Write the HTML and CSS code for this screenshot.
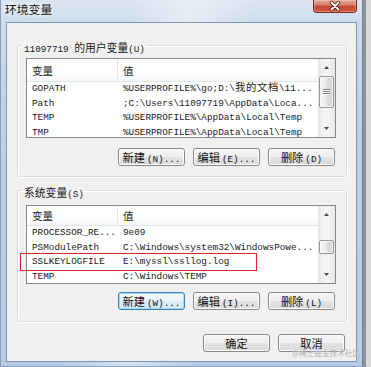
FILE: index.html
```html
<!DOCTYPE html>
<html lang="zh-CN">
<head>
<meta charset="utf-8">
<title>环境变量</title>
<link rel="stylesheet" href="styles.css">
</head>
<body>
<div class="window">
  <div class="titlebar">
    <span class="title">环境变量</span>
    <button class="close" aria-label="关闭">
      <svg width="42" height="12" viewBox="0 0 42 12">
        <path d="M17.5 2.5 L24.5 9.5 M24.5 2.5 L17.5 9.5" stroke="#5b1c14" stroke-width="3.4" stroke-linecap="round"/>
        <path d="M17.5 2.5 L24.5 9.5 M24.5 2.5 L17.5 9.5" stroke="#ffffff" stroke-width="1.8" stroke-linecap="round"/>
      </svg>
    </button>
  </div>
  <div class="content">
    <fieldset class="group group-user">
      <legend><span class="m">11097719 </span><span class="c">的用户变量</span><span class="m">(U)</span></legend>
      <div class="list list-user">
        <div class="list-main">
          <div class="list-head"><div class="col1">变量</div><div class="col2">值</div></div>
          <div class="row"><div class="col1">GOPATH</div><div class="col2">%USERPROFILE%\go;D:\<span class="rc">我的文档</span>\11...</div></div>
          <div class="row"><div class="col1">Path</div><div class="col2">;C:\Users\11097719\AppData\Loca...</div></div>
          <div class="row"><div class="col1">TEMP</div><div class="col2">%USERPROFILE%\AppData\Local\Temp</div></div>
          <div class="row"><div class="col1">TMP</div><div class="col2">%USERPROFILE%\AppData\Local\Temp</div></div>
        </div>
        <div class="scrollbar">
          <div class="sb-btn"><svg width="5" height="3" viewBox="0 0 5 3"><path d="M0 3 L2.5 0 L5 3Z" fill="#4a4a4a"/></svg></div>
          <div class="sb-track"><div class="thumb thumb-user"><span class="grip"></span></div></div>
          <div class="sb-btn"><svg width="5" height="3" viewBox="0 0 5 3"><path d="M0 0 L2.5 3 L5 0Z" fill="#4a4a4a"/></svg></div>
        </div>
      </div>
      <div class="btnrow">
        <button class="btn">新建<span class="m">(N)...</span></button>
        <button class="btn">编辑<span class="m">(E)...</span></button>
        <button class="btn">删除<span class="m">(D)</span></button>
      </div>
    </fieldset>

    <fieldset class="group group-sys">
      <legend><span class="c">系统变量</span><span class="m">(S)</span></legend>
      <div class="list list-sys">
        <div class="list-main">
          <div class="list-head"><div class="col1">变量</div><div class="col2">值</div></div>
          <div class="row"><div class="col1">PROCESSOR_RE...</div><div class="col2">9e09</div></div>
          <div class="row"><div class="col1">PSModulePath</div><div class="col2">C:\Windows\system32\WindowsPowe...</div></div>
          <div class="row"><div class="col1">SSLKEYLOGFILE</div><div class="col2">E:\myssl\ssllog.log</div></div>
          <div class="row"><div class="col1">TEMP</div><div class="col2">C:\Windows\TEMP</div></div>
        </div>
        <div class="scrollbar">
          <div class="sb-btn"><svg width="5" height="3" viewBox="0 0 5 3"><path d="M0 3 L2.5 0 L5 3Z" fill="#4a4a4a"/></svg></div>
          <div class="sb-track"><div class="thumb thumb-sys"></div></div>
          <div class="sb-btn"><svg width="5" height="3" viewBox="0 0 5 3"><path d="M0 0 L2.5 3 L5 0Z" fill="#4a4a4a"/></svg></div>
        </div>
      </div>
      <div class="btnrow">
        <button class="btn btn-default">新建<span class="m">(W)...</span></button>
        <button class="btn">编辑<span class="m">(I)...</span></button>
        <button class="btn">删除<span class="m">(L)</span></button>
      </div>
    </fieldset>

    <div class="dlg-actions">
      <button class="btn">确定</button>
      <button class="btn">取消</button>
    </div>
  </div>
  <div class="annot"></div>
  <div class="watermark">@稀土掘金技术社区</div>
</div>
</body>
</html>
```

FILE: styles.css
```css
* { box-sizing: border-box; }

html, body {
  margin: 0;
  padding: 0;
}

body {
  width: 371px;
  height: 367px;
  overflow: hidden;
  background: linear-gradient(to right, #8d9298 0, #8d9298 366px, #d9d9d9 366px);
  font-family: "Noto Sans CJK SC", "Noto Sans", sans-serif;
  color: #1a1a1a;
}

.window {
  position: relative;
  width: 363px;
  height: 367px;
  padding: 0 6px 5px 6px;
  background:
    linear-gradient(100deg, rgba(255,255,255,0) 30%, rgba(255,255,255,0.45) 45%, rgba(255,255,255,0) 60%),
    linear-gradient(to bottom, #dbe5f1 0, #cfdcec 22px, #bcd0e8 120px, #b6cce6 100%);
  box-shadow: inset -1px 0 0 #6f8299, inset 1px 0 0 #8aa0ba, inset 0 -1px 0 #8aa0ba;
}

.titlebar {
  height: 22px;
  display: flex;
  justify-content: space-between;
  align-items: flex-start;
}

.title {
  margin-left: -1px;
  font-size: 11.8px;
  line-height: 18px;
  color: #111;
  text-shadow: 0 0 6px #fff, 0 0 3px #fff;
}

.close {
  width: 44px;
  height: 13px;
  padding: 0;
  margin: 0;
  border: 1px solid #7d2e24;
  border-top: none;
  border-radius: 0 0 4px 4px;
  background: linear-gradient(to bottom, #e6a597 0, #d6806e 40%, #c44a31 55%, #cf5a3f 100%);
  box-shadow: inset 0 0 0 1px rgba(255,255,255,0.25);
  display: flex;
  align-items: center;
  justify-content: center;
}

.close svg { display: block; }

.content {
  width: 351px;
  height: 340px;
  border: 1px solid #8497b0;
  background: #f0f0f0;
  padding: 16px 10px 0 10px;
}

.m {
  font-family: "Liberation Mono", monospace;
  font-size: 9.3px;
}

.c {
  font-family: "Noto Sans CJK SC", sans-serif;
  font-size: 10.8px;
}

.group {
  width: 330px;
  margin: 0;
  border: 1px solid #d5dfe5;
  border-radius: 3px;
  box-shadow: inset 1px 1px 0 #fff, 1px 1px 0 #fff;
  padding: 7px 10px 10px 8px;
  min-width: 0;
}

.group legend {
  margin-left: -4px;
  padding: 0 2px;
  height: 12px;
  line-height: 12px;
  color: #1a1a1a;
  white-space: nowrap;
}

.group-sys {
  margin-top: 7px;
  padding-top: 9px;
  padding-bottom: 11px;
}

.list {
  position: relative;
  display: flex;
  height: 80px;
  border: 1px solid #828790;
  background: #fff;
}

.list-sys { height: 79px; }

.list-main {
  flex: 1;
  min-width: 0;
  overflow: hidden;
}

.list-head {
  display: flex;
  height: 23px;
  border-bottom: 1px solid #e3e6ea;
  background: linear-gradient(to bottom, #ffffff 0, #ffffff 60%, #f6f7f9 100%);
  font-family: "Noto Sans CJK SC", sans-serif;
  font-size: 10.6px;
  color: #1c1c1c;
}

.list-sys .list-head { height: 20px; }

.list-head .col1,
.list-head .col2 {
  display: flex;
  align-items: center;
}

.list-head .col1 { border-right: 1px solid #e3e6ea; }

.col1 {
  width: 91px;
  flex: none;
  padding-left: 5px;
  white-space: nowrap;
  overflow: hidden;
}

.col2 {
  flex: 1;
  padding-left: 5px;
  white-space: nowrap;
}

.row {
  display: flex;
  height: 14.5px;
  line-height: 14.5px;
  font-family: "Liberation Mono", monospace;
  font-size: 9.33px;
  color: #1a1a1a;
}

.rc {
  font-family: "Noto Sans CJK SC", sans-serif;
  font-size: 10.4px;
  line-height: 1;
  letter-spacing: 0.6px;
}

.scrollbar {
  width: 17px;
  flex: none;
  display: flex;
  flex-direction: column;
  background: linear-gradient(to right, #e4e4e4 0, #f1f1f1 25%, #f4f4f4 60%, #e8e8e8 100%);
}

.sb-btn {
  height: 17px;
  flex: none;
  display: flex;
  align-items: center;
  justify-content: center;
}

.sb-btn svg { display: block; }

.sb-track { flex: 1; min-height: 0; }

.thumb {
  margin: 0 1px;
  border: 1px solid #979797;
  border-radius: 2px;
  background: linear-gradient(to right, #f5f5f5 0, #ebebeb 45%, #dcdcdc 55%, #d3d3d3 100%);
  box-shadow: inset 0 0 0 1px rgba(255,255,255,0.7);
  display: flex;
  align-items: center;
  justify-content: center;
}

.thumb-user { height: 32px; }

.thumb-sys {
  height: 14px;
  margin-top: 17px;
}

.grip {
  display: block;
  width: 7px;
  height: 6px;
  background: repeating-linear-gradient(to bottom, #7a7a7a 0, #7a7a7a 1px, #ffffff 1px, #ffffff 2px);
}

.btnrow {
  display: flex;
  justify-content: flex-end;
  gap: 8px;
  margin-top: 10px;
  padding-right: 1px;
}

.group-sys .btnrow { margin-top: 8px; }

.btn {
  width: 67px;
  height: 18px;
  padding: 0;
  margin: 0;
  border: 1px solid #8a8a8a;
  border-radius: 3px;
  background: linear-gradient(to bottom, #f6f6f6 0, #efefef 48%, #e3e3e3 52%, #dadada 100%);
  box-shadow: inset 0 0 0 1px #fbfbfb;
  font-family: "Noto Sans CJK SC", sans-serif;
  font-size: 11.2px;
  line-height: 16px;
  color: #111;
  white-space: nowrap;
}

.btn .m { margin-left: 2px; }

.btn-default {
  border-color: #3c7fb1;
  box-shadow: inset 0 0 0 1px #9cdcf7;
  background: linear-gradient(to bottom, #f3fafe 0, #eaf5fc 48%, #dcedf8 52%, #d4e8f6 100%);
}

.dlg-actions {
  display: flex;
  justify-content: flex-end;
  gap: 8px;
  margin-top: 12px;
  padding-right: 1px;
}

.annot {
  position: absolute;
  left: 20px;
  top: 253px;
  width: 237px;
  height: 18px;
  border: 1px solid #d8262c;
}

.watermark {
  position: absolute;
  left: 292px;
  top: 347px;
  font-size: 7.6px;
  line-height: 11px;
  color: rgba(140, 140, 140, 0.75);
  text-shadow: 0 0 1px #fff;
  white-space: nowrap;
}
```
